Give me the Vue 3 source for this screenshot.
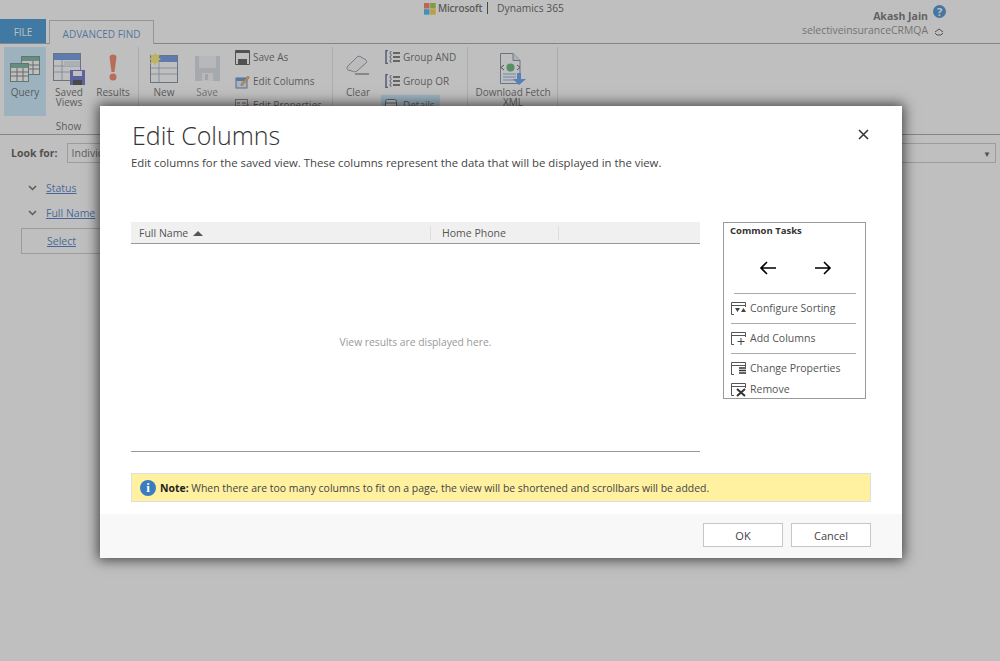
<script setup>
const tasks = [
  { label: 'Configure Sorting', icon: 'sort' },
  { label: 'Add Columns', icon: 'add' },
  { label: 'Change Properties', icon: 'props' },
  { label: 'Remove', icon: 'remove' }
]
</script>

<template>
  <div class="page">
    <header class="top">
      <div class="tabs">
        <div class="tab-file">FILE</div>
        <div class="tab-find">ADVANCED FIND</div>
      </div>
      <div class="brand">
        <svg class="ms-logo" width="12" height="12" viewBox="0 0 12 12">
          <rect width="5.5" height="5.5" fill="#f25022" />
          <rect x="6.2" width="5.5" height="5.5" fill="#7fba00" />
          <rect y="6.2" width="5.5" height="5.5" fill="#00a4ef" />
          <rect x="6.2" y="6.2" width="5.5" height="5.5" fill="#ffb900" />
        </svg>
        <span class="ms-name">Microsoft</span>
        <span class="brand-sep"></span>
        <span class="dyn-name">Dynamics 365</span>
      </div>
      <div class="user">
        <div class="user-row">
          <span class="user-name">Akash Jain</span>
          <span class="help">?</span>
        </div>
        <div class="user-row">
          <span class="org">selectiveinsuranceCRMQA</span>
          <svg width="10" height="8" viewBox="0 0 10 8" class="org-chev">
            <path d="M1 4 5 1l4 3M1 5l2 2h4l2-2" fill="none" stroke="#222" stroke-width="1" />
          </svg>
        </div>
      </div>
    </header>

    <section class="ribbon">
      <div class="group group-show">
        <div class="group-btns">
          <div class="big-btn btn-query">
            <svg width="32" height="28" viewBox="0 0 32 28">
              <g fill="#fff" stroke="#3f6f60">
                <rect x="12.5" y="1.5" width="18" height="18" />
                <rect x="1.5" y="8.5" width="18" height="18" />
              </g>
              <rect x="13" y="2" width="17" height="4" fill="#4f9b82" />
              <rect x="2" y="9" width="17" height="4" fill="#4f9b82" />
              <path d="M20 10h10M20 14h10M24 6v13M2 17h17M2 21h17M8 13v13M14 13v13" stroke="#555" fill="none" />
            </svg>
            <span>Query</span>
          </div>
          <div class="big-btn btn-saved">
            <svg width="34" height="34" viewBox="0 0 34 34">
              <rect x="1.5" y="1.5" width="27" height="27" fill="#fff" stroke="#55688a" />
              <rect x="2" y="2" width="26" height="6" fill="#3f76dc" />
              <path d="M2 14h26M2 20h26M10 8v20" stroke="#8aa2ba" fill="none" />
              <rect x="12" y="9" width="16" height="5" fill="#d5e0ea" />
              <rect x="18" y="18" width="15" height="15" fill="#3a44b8" />
              <rect x="21" y="19" width="9" height="5" fill="#fff" />
              <rect x="21" y="28" width="9" height="5" fill="#111" />
            </svg>
            <span>Saved<br />Views</span>
          </div>
          <div class="big-btn btn-results">
            <svg width="12" height="28" viewBox="0 0 12 28">
              <path d="M2.5 3C2.5-.5 9.5-.5 9.500 3L7.500 18h-3z" fill="#ec5a32" />
              <circle cx="6" cy="23" r="3.5" fill="#ec5a32" />
            </svg>
            <span>Results</span>
          </div>
        </div>
        <div class="group-label">Show</div>
      </div>

      <div class="group group-view">
        <div class="big-btn btn-new">
          <svg width="30" height="31" viewBox="0 0 30 31">
            <rect x="1.5" y="3.5" width="27" height="27" fill="#fff" stroke="#55688a" />
            <rect x="2" y="4" width="26" height="6" fill="#3f76dc" />
            <path d="M2 16h26M2 22h26M10 10v20" stroke="#8aa2ba" fill="none" />
            <path d="M6 0l1.500 3.500L11 2 9.500 5.500 12 7 9.500 8.500 11 12 7.500 10.500 6 14 4.500 10.500 1 12l1.500-3.500L0 7l2.500-1.500L1 2l3.500 1.500z" fill="#ffe84a" />
          </svg>
          <span>New</span>
        </div>
        <div class="big-btn btn-save">
          <svg width="27" height="27" viewBox="0 0 27 27">
            <path d="M1 1h25v25H1z" fill="#ccd2dc" />
            <rect x="5" y="1" width="17" height="12" fill="#eef0f3" />
            <rect x="8" y="18" width="11" height="8" fill="#f2f3f5" />
            <rect x="11" y="19" width="3" height="6" fill="#c5cbd5" />
          </svg>
          <span>Save</span>
        </div>
        <div class="small-col">
          <div class="small-btn">
            <svg width="15" height="15" viewBox="0 0 15 15">
              <path d="M.5.5h14v14H.5z" fill="#fff" stroke="#222" />
              <rect x="1" y="1" width="13" height="2" fill="#222" />
              <rect x="3" y="9" width="9" height="6" fill="#222" />
            </svg>
            <span>Save As</span>
          </div>
          <div class="small-btn">
            <svg width="15" height="15" viewBox="0 0 15 15">
              <rect x="1" y="4" width="11" height="10" fill="#dbe6f5" stroke="#2c5aa0" />
              <rect x="1" y="4" width="11" height="3" fill="#2f74d0" />
              <path d="M6 10l7-8 1.500 1.500-7 8H6z" fill="#f0a020" stroke="#705010" stroke-width=".5" />
            </svg>
            <span>Edit Columns</span>
          </div>
          <div class="small-btn">
            <svg width="15" height="15" viewBox="0 0 15 15">
              <rect x=".5" y="1.5" width="12" height="12" fill="#fff" stroke="#666" />
              <path d="M2 5h3M2 8h3M2 11h3M7 5h4M7 8h4" stroke="#333" />
              <path d="M10 9l3-3 1 1-3 3z" fill="#d02020" />
            </svg>
            <span>Edit Properties</span>
          </div>
        </div>
      </div>

      <div class="group group-query">
        <div class="big-btn btn-clear">
          <svg width="24" height="20" viewBox="0 0 24 20">
            <path d="M1 12 11 2c1-1 3-1 4 0l5 3c1 1 1 2 0 3L11 16c-2 1-3 1-5 0L2 15c-1-1-1-2-1-3z" fill="#f6f6f6" stroke="#66748a" />
            <path d="M9 19h14" stroke="#222" />
          </svg>
          <span>Clear</span>
        </div>
        <div class="small-col">
          <div class="small-btn">
            <svg width="15" height="14" viewBox="0 0 15 14">
              <path d="M3 .5H1v13h2" fill="none" stroke="#2a3c60" stroke-width="1.500" />
              <path d="M6.500 1.500a1.500 1.500 0 1 0 0 3M6.500 5.500a1.500 1.500 0 1 0 0 3M6.500 9.500a1.500 1.500 0 1 0 0 3" fill="none" stroke="#2a3c60" />
              <path d="M8 3h7M8 7h7M8 11h7" stroke="#111" stroke-width="1.300" />
            </svg>
            <span>Group AND</span>
          </div>
          <div class="small-btn">
            <svg width="15" height="14" viewBox="0 0 15 14">
              <path d="M3 .5H1v13h2" fill="none" stroke="#2a3c60" stroke-width="1.500" />
              <path d="M6.500 1.500a1.500 1.500 0 1 0 0 3M6.500 5.500a1.500 1.500 0 1 0 0 3M6.500 9.500a1.500 1.500 0 1 0 0 3" fill="none" stroke="#2a3c60" />
              <path d="M8 3h7M8 7h7M8 11h7" stroke="#111" stroke-width="1.300" />
            </svg>
            <span>Group OR</span>
          </div>
          <div class="small-btn details-btn">
            <svg width="15" height="14" viewBox="0 0 15 14">
              <rect x=".5" y="1.5" width="11" height="10" rx="2" fill="#fff" stroke="#2a3c60" />
              <path d="M1 5h10" stroke="#2a3c60" />
              <rect x="6" y="8" width="8" height="5" fill="#ffe84a" stroke="#705f10" stroke-width=".5" />
            </svg>
            <span>Details</span>
          </div>
        </div>
      </div>

      <div class="group group-download">
        <div class="big-btn btn-download">
          <svg width="28" height="32" viewBox="0 0 28 32">
            <path d="M1.500.5H14l7 7v23H1.500z" fill="#fff" stroke="#55688a" />
            <path d="M14 .5v7h7" fill="#dde5ec" stroke="#55688a" />
            <path d="M5 12l-3 2.500 3 2.500M18 12l3 2.500-3 2.500" fill="none" stroke="#222" />
            <circle cx="11.500" cy="14.500" r="4" fill="#2f9f48" />
            <path d="M4 21h13M4 24h13M4 27h13" stroke="#5f8ad8" />
            <path d="M18 20h4v6h5l-7 6-6-6h4z" fill="#2f80e8" />
          </svg>
          <span>Download Fetch<br />XML</span>
        </div>
      </div>
    </section>

    <section class="query">
      <div class="look-for">
        <b>Look for:</b>
        <div class="entity-select">
          <span>Individual</span>
          <i class="select-arrow">▼</i>
        </div>
      </div>
      <div class="clause">
        <svg width="9" height="6" viewBox="0 0 9 6"><path d="M1 1l3.500 3.500L8 1" fill="none" stroke="#333" stroke-width="1.500" /></svg>
        <a>Status</a>
      </div>
      <div class="clause">
        <svg width="9" height="6" viewBox="0 0 9 6"><path d="M1 1l3.500 3.500L8 1" fill="none" stroke="#333" stroke-width="1.500" /></svg>
        <a>Full Name</a>
      </div>
      <div class="select-box"><a>Select</a></div>
    </section>

    <div class="overlay"></div>

    <div class="dialog">
      <div class="dialog-body">
        <div class="title-row">
          <h1>Edit Columns</h1>
          <svg class="close" width="11" height="11" viewBox="0 0 11 11">
            <path d="M1 1l9 9M10 1l-9 9" stroke="#333" stroke-width="1.500" />
          </svg>
        </div>
        <p class="sub">Edit columns for the saved view. These columns represent the data that will be displayed in the view.</p>

        <div class="work">
          <div class="grid">
            <div class="grid-head">
              <div class="col col-name">Full Name <i class="sort-up"></i></div>
              <div class="col col-phone">Home Phone</div>
              <div class="col"></div>
            </div>
            <div class="grid-empty">View results are displayed here.</div>
          </div>

          <aside class="tasks">
            <div class="tasks-title">Common Tasks</div>
            <div class="arrows">
              <svg width="18" height="14" viewBox="0 0 18 14"><path d="M17 7H2M8 1 2 7l6 6" fill="none" stroke="#000" stroke-width="1.600" /></svg>
              <svg width="18" height="14" viewBox="0 0 18 14"><path d="M1 7h15M10 1l6 6-6 6" fill="none" stroke="#000" stroke-width="1.600" /></svg>
            </div>
            <div v-for="(t, i) in tasks" :key="t.label" class="task" :class="['task-' + t.icon, { ruled: i < 2 }]">
              <svg width="17" height="15" viewBox="0 0 17 15">
                <path d="M.5 10V1.500h14V6M1 4.500h14M.5 10v3.500H3" fill="none" stroke="#555" />
                <path v-if="t.icon === 'sort'" d="M4 7h5l-2.500 4zM10 11l2.500-4 2.500 4z" fill="#444" />
                <path v-if="t.icon === 'add'" d="M10 7v7M6.500 10.500h7" stroke="#444" fill="none" />
                <path v-if="t.icon === 'props'" d="M8 7h7M8 9.500h7M8 12h7" stroke="#333" stroke-width="1.400" fill="none" />
                <path v-if="t.icon === 'remove'" d="M6 7l8 7M14 7l-8 7" stroke="#333" stroke-width="2" fill="none" />
              </svg>
              <span>{{ t.label }}</span>
            </div>
          </aside>
        </div>

        <div class="note">
          <span class="info">i</span>
          <span class="note-text"><b>Note:</b> When there are too many columns to fit on a page, the view will be shortened and scrollbars will be added.</span>
        </div>
      </div>

      <footer class="dialog-foot">
        <button>OK</button>
        <button>Cancel</button>
      </footer>
    </div>
  </div>
</template>

<style>
html, body {
  margin: 0;
  height: 100%;
  overflow: hidden;
}
</style>

<style scoped>
.page {
  position: relative;
  width: 1000px;
  height: 661px;
  overflow: hidden;
  background: #fff;
  font-family: "Open Sans", "Noto Sans", sans-serif;
  font-size: 10px;
  color: #333;
}

.top {
  display: grid;
  grid-template-columns: 424px auto 1fr;
  height: 43px;
  border-bottom: 1px solid #8a8a8a;
}
.tabs {
  display: flex;
  align-items: flex-end;
}
.tab-file {
  width: 46px;
  height: 24px;
  line-height: 26px;
  text-align: center;
  background: #0072c6;
  color: #fff;
}
.tab-find {
  position: relative;
  margin: 0 0 -1px 3px;
  width: 103px;
  height: 23px;
  line-height: 26px;
  text-align: center;
  border: 1px solid #aaa;
  border-bottom: 0;
  color: #1a6cb8;
  background: #fff;
}
.brand {
  display: flex;
  align-items: center;
  height: 16px;
  color: #222;
}
.ms-logo { margin: 1px 2px 0 0; }
.ms-name { font-size: 10px; font-weight: 600; color: #333; width: 40px; letter-spacing: -0.2px; }
.brand-sep {
  width: 1px;
  height: 12px;
  background: #111;
  margin: 0 9px;
}
.dyn-name { font-size: 10.3px; color: #222; white-space: nowrap; }
.user {
  padding: 9px 72px 0 0;
  display: flex;
  flex-direction: column;
  align-items: flex-end;
}
.user-row {
  display: flex;
  align-items: center;
  position: relative;
  height: 14px;
}
.user-name { font-weight: 700; font-size: 10.5px; color: #444; }
.org { font-size: 10.4px; color: #666; }
.help {
  position: absolute;
  left: 100%;
  top: -4px;
  margin-left: 5px;
  width: 13px;
  height: 13px;
  border-radius: 50%;
  background: #0f6cc4;
  color: #fff;
  font-weight: 700;
  font-size: 11px;
  line-height: 13px;
  text-align: center;
}
.org-chev {
  position: absolute;
  left: 100%;
  top: 5px;
  margin-left: 6px;
}

.ribbon {
  display: flex;
  height: 90px;
  border-bottom: 1px solid #8a8a8a;
  overflow: hidden;
}
.group {
  display: flex;
  box-sizing: border-box;
  border-right: 1px solid #d8d8d8;
  margin-top: 3px;
  height: 84px;
}
.group-show {
  flex-direction: column;
  width: 139px;
  padding-left: 4px;
}
.group-btns { display: flex; }
.group-label {
  text-align: center;
  margin-top: 3px;
  padding-right: 5px;
}
.group-view { width: 194px; }
.group-query { width: 135px; }
.group-download { width: 90px; }
/* icon slot is a fixed 40px so every first label line sits on the same row */
.big-btn {
  display: grid;
  grid-template-rows: 40px auto;
  justify-items: center;
  align-content: start;
  height: 69px;
  text-align: center;
  line-height: 10px;
  white-space: nowrap;
  flex: none;
}
.btn-query { width: 42px; background: #b8e6ff; }
.btn-query svg { margin-top: 8px; }
.btn-saved { width: 46px; }
.btn-saved svg { margin-top: 5px; }
.btn-results { width: 42px; }
.btn-results svg { margin-top: 7px; }
.btn-new { width: 50px; }
.btn-new svg { margin-top: 5px; }
.btn-save { width: 34px; margin-left: 1px; color: #666; }
.btn-save svg { margin-top: 8px; }
.btn-clear { width: 50px; margin-right: 2px; }
.btn-clear svg { margin-top: 8px; }
.btn-download { width: 90px; }
.btn-download svg { margin-top: 6px; }
.small-col {
  display: flex;
  flex-direction: column;
  gap: 10px;
  padding-top: 3px;
}
.group-view .small-col { margin-left: 11px; }
.small-btn {
  display: flex;
  align-items: center;
  gap: 3px;
  height: 14px;
  white-space: nowrap;
}
.details-btn {
  background: #b8e6ff;
  margin: -3px 0 0 -4px;
  padding: 1px 4px;
  width: 51px;
  height: 18px;
}

.query { padding: 8px 4px 0 11px; }
.look-for {
  display: flex;
  align-items: center;
  gap: 9px;
  font-size: 10.5px;
  height: 20px;
  margin-bottom: 12px;
}
.look-for b { color: #222; }
.entity-select {
  flex: 1;
  height: 18px;
  border: 1px solid #b8b8b8;
  display: flex;
  align-items: center;
  justify-content: space-between;
  padding: 0 4px;
}
.select-arrow { font-style: normal; font-size: 8px; color: #222; }
.clause {
  display: flex;
  align-items: center;
  gap: 9px;
  padding-left: 17px;
  height: 25px;
}
.query a {
  color: #0a50b0;
  text-decoration: underline;
  font-size: 10.5px;
}
.select-box {
  margin: 3px 0 0 10px;
  width: 300px;
  height: 26px;
  line-height: 24px;
  border: 1px solid #b8b8b8;
  padding-left: 25px;
  box-sizing: border-box;
}

.overlay {
  position: absolute;
  inset: 0;
  background: rgba(128, 128, 128, 0.5);
}

.dialog {
  position: absolute;
  left: 100px;
  top: 106px;
  width: 802px;
  height: 452px;
  background: #fff;
  box-shadow: 0 0 12px 2px rgba(0, 0, 0, 0.65);
  display: flex;
  flex-direction: column;
}
.dialog-body {
  flex: 1;
  padding: 0 31px;
}
.title-row {
  display: flex;
  justify-content: space-between;
  align-items: center;
  height: 49px;
  padding-top: 8px;
  box-sizing: border-box;
  margin-left: 1px;
}
h1 {
  margin: 0;
  font-size: 25px;
  font-weight: 300;
  color: #333;
}
.close { margin-right: 2px; }
.sub {
  margin: 0;
  font-size: 11.35px;
  line-height: 16px;
  color: #444;
  height: 16px;
}
.work {
  display: flex;
  justify-content: space-between;
  margin-top: 51px;
  height: 230px;
  padding-right: 5px;
}
.grid {
  width: 569px;
  border-bottom: 1px solid #999;
  display: flex;
  flex-direction: column;
}
.grid-head {
  display: flex;
  height: 22px;
  box-sizing: border-box;
  background: #f0f0f0;
  border-bottom: 1px solid #999;
  font-size: 10.5px;
  color: #555;
  align-items: center;
  flex: none;
}
.col {
  height: 14px;
  line-height: 14px;
  box-sizing: border-box;
  border-right: 1px solid #ddd;
  white-space: nowrap;
  padding-left: 8px;
}
.col:last-child { border: 0; }
.col-name { width: 300px; }
.col-phone { width: 128px; padding-left: 11px; }
.sort-up {
  display: inline-block;
  width: 0;
  height: 0;
  margin-left: 2px;
  border: 5px solid transparent;
  border-top: 0;
  border-bottom: 5px solid #555;
  vertical-align: 1px;
}
.grid-empty {
  flex: 1;
  display: flex;
  align-items: center;
  justify-content: center;
  color: #999;
  font-size: 10.3px;
  padding-bottom: 12px;
}
.tasks {
  width: 143px;
  height: 177px;
  box-sizing: border-box;
  border: 1px solid #999;
  padding: 0 6px;
  overflow: hidden;
}
.tasks-title {
  font-weight: 700;
  font-size: 9.5px;
  line-height: 15px;
  color: #333;
}
.arrows {
  display: flex;
  justify-content: center;
  gap: 37px;
  height: 32px;
  margin: 23px 3px 0 4px;
  border-bottom: 1px solid #aaa;
}
.task {
  display: flex;
  align-items: center;
  gap: 2px;
  height: 29px;
  font-size: 10.5px;
  color: #555;
  margin: 0 3px 0 1px;
}
.task span { margin-top: -2px; }
.task.ruled { border-bottom: 1px solid #aaa; height: 30px; box-sizing: border-box; }
.task-remove { height: 14px; margin-top: -1px; }
.task-remove span { margin-top: 0; }
.note {
  display: flex;
  align-items: center;
  width: 740px;
  height: 29px;
  margin-top: 21px;
  box-sizing: border-box;
  border: 1px solid #dcdfe4;
  background: #fff19f;
  padding-left: 8px;
  font-size: 10.45px;
  color: #444;
}
.note b { color: #222; }
.info {
  width: 16px;
  height: 16px;
  border-radius: 50%;
  background: #3a7cc0;
  color: #fff;
  font-weight: 700;
  font-size: 13px;
  line-height: 16px;
  text-align: center;
  margin-right: 4px;
  font-family: "Liberation Serif", serif;
}
.note-text { white-space: nowrap; }
.dialog-foot {
  display: flex;
  justify-content: flex-end;
  gap: 8px;
  height: 44px;
  background: #f8f8f8;
  padding: 9px 31px 0 0;
  box-sizing: border-box;
}
button {
  width: 80px;
  height: 24px;
  background: #fff;
  border: 1px solid #c6c6c6;
  font: inherit;
  font-size: 11px;
  color: #444;
}
</style>
